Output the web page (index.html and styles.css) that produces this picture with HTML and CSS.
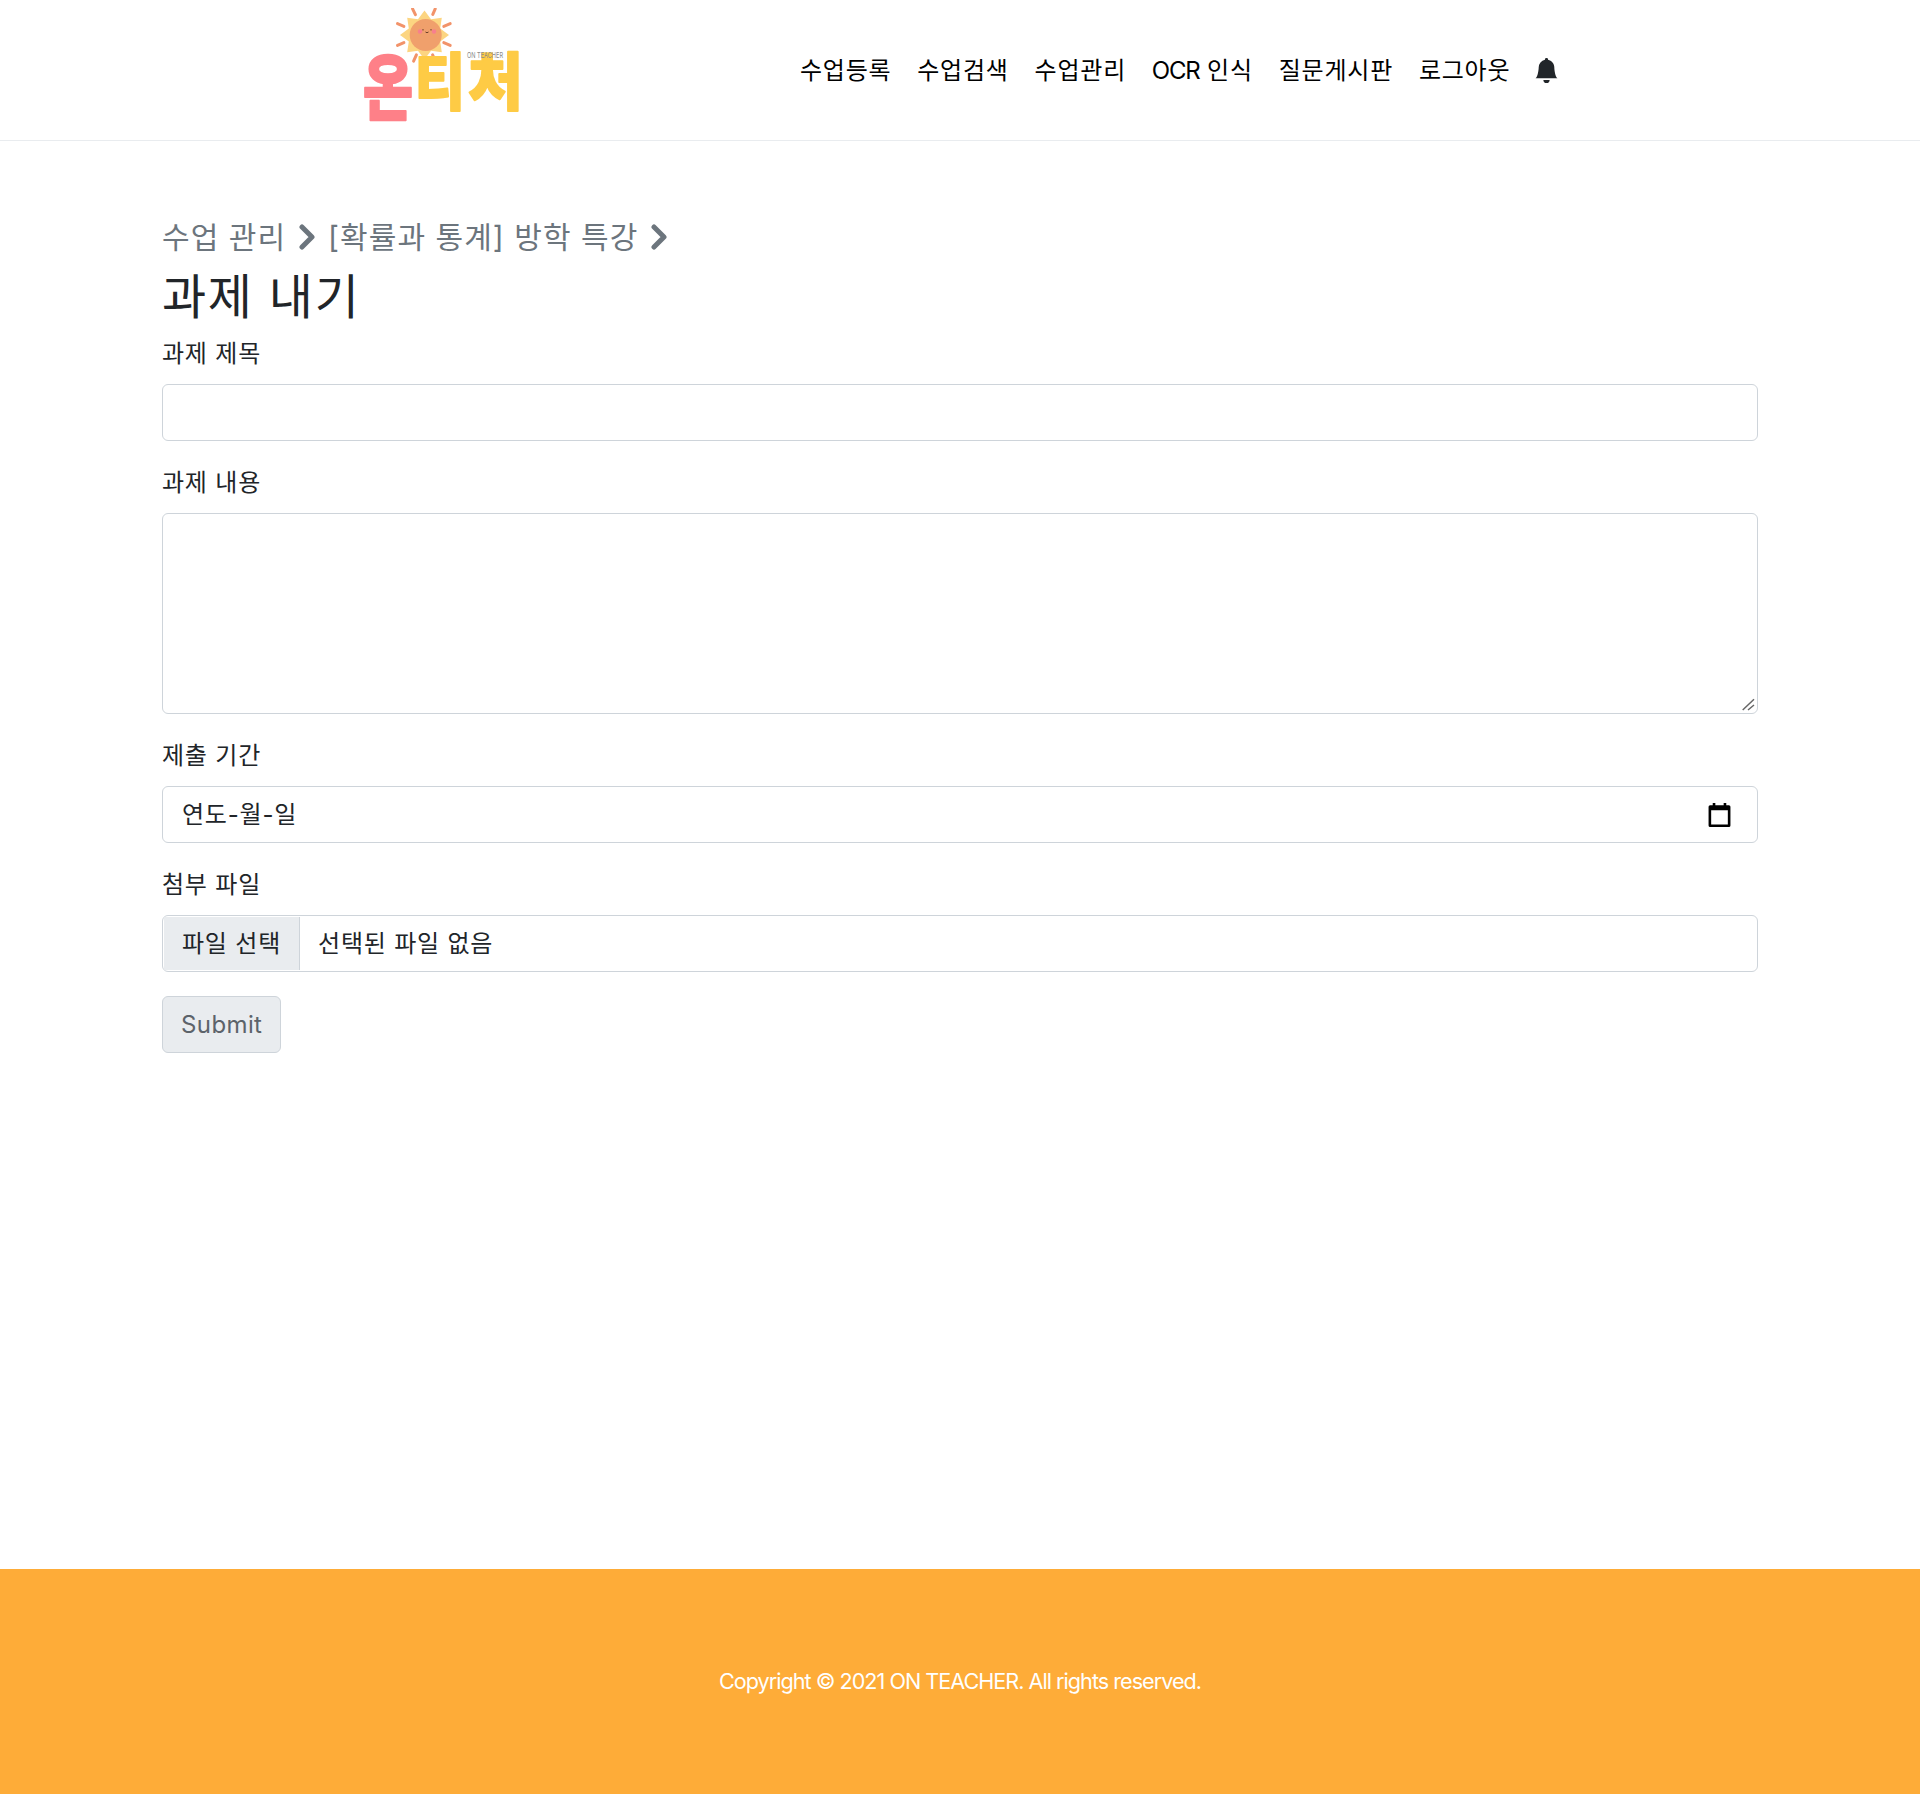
FILE: index.html
```html
<!DOCTYPE html>
<html lang="ko">
<head>
<meta charset="utf-8">
<title>과제 내기</title>
<link rel="stylesheet" href="styles.css">
</head>
<body>
<header class="site-header">
  <a class="logo" href="#" aria-label="온티처">
    <svg class="logo-art" viewBox="0 0 170 124" width="170" height="124">
      <g class="rays">
        <line x1="54.600" y1="0.800" x2="57.400" y2="6.700"/><line x1="74.800" y1="6.400" x2="77.200" y2="0.800"/>
        <line x1="39.500" y1="15.600" x2="45.900" y2="18.400"/><line x1="85.800" y1="18.400" x2="92.200" y2="15.600"/>
        <line x1="39.500" y1="37.400" x2="45.900" y2="34.600"/><line x1="85.800" y1="34.600" x2="92.200" y2="37.400"/>
        <line x1="58.400" y1="46.800" x2="55.600" y2="53.200"/><line x1="74.600" y1="46.800" x2="77.400" y2="53.200"/>
      </g>
      <polygon class="sun-star" points="66.500,2.500 73,11.300 83.800,9.700 82.200,20.500 91,27 82.200,33.500 83.800,44.300 73,42.700 66.500,51.500 60,42.700 49.200,44.300 50.800,33.500 42,27 50.800,20.500 49.200,9.700 60,11.300"/>
      <circle class="sun-body" cx="67.700" cy="27" r="16"/>
      <circle class="sun-cheek" cx="62" cy="23.500" r="2.200"/><circle class="sun-cheek" cx="76" cy="23.500" r="2.200"/>
      <path class="sun-face" d="M65 21v1.500M73 21v1.500M67.500 24q1.500 1.500 3 0"/>
      <text class="word word-pink" x="5" y="106" textLength="50" lengthAdjust="spacingAndGlyphs">온</text>
      <text class="word word-yellow" x="57" y="97" textLength="50" lengthAdjust="spacingAndGlyphs">티</text>
      <text class="word word-yellow" x="110" y="97" textLength="55" lengthAdjust="spacingAndGlyphs">처</text>
      <text class="logo-sub" x="109" y="50" textLength="36" lengthAdjust="spacingAndGlyphs">ON TEACHER</text>
    </svg>
  </a>
  <nav class="main-nav">
    <a href="#">수업등록</a>
    <a href="#">수업검색</a>
    <a href="#">수업관리</a>
    <a href="#"><span class="latin-tight">OCR</span> 인식</a>
    <a href="#">질문게시판</a>
    <a href="#">로그아웃</a>
    <a href="#" class="bell" aria-label="알림">
      <svg viewBox="0 0 16 16" width="25" height="25"><path d="M8 16a2 2 0 0 0 2-2H6a2 2 0 0 0 2 2zm.995-14.901a1 1 0 1 0-1.99 0A5.002 5.002 0 0 0 3 6c0 1.098-.5 6-2 7h14c-1.5-1-2-5.902-2-7 0-2.42-1.72-4.44-4.005-4.901z"/></svg>
    </a>
  </nav>
</header>

<main class="content">
  <div class="crumbs">
    <span>수업 관리</span>
    <svg class="chev" viewBox="0 0 20 26" width="20" height="26"><path d="M5 3l10 10L5 23"/></svg>
    <span>[확률과 통계] 방학 특강</span>
    <svg class="chev" viewBox="0 0 20 26" width="20" height="26"><path d="M5 3l10 10L5 23"/></svg>
  </div>
  <h2 class="page-title">과제 내기</h2>
  <form>
    <div class="field">
      <label class="field-label" for="t">과제 제목</label>
      <input class="control" id="t" type="text">
    </div>
    <div class="field">
      <label class="field-label" for="c">과제 내용</label>
      <div class="area-wrap">
        <textarea class="control area" id="c"></textarea>
        <svg class="grip" viewBox="0 0 16 16" width="16" height="16"><path d="M2.700 14L14 3.300M8 14l6-5"/></svg>
      </div>
    </div>
    <div class="field">
      <div class="field-label">제출 기간</div>
      <div class="control date">
        <span>연도-월-일</span>
        <svg viewBox="0 0 24 24" width="25" height="25"><path d="M5.500 3V1h2.500v2h8V1h2.500v2H21a1.500 1.500 0 0 1 1.500 1.500v18A1.500 1.500 0 0 1 21 24H3a1.500 1.500 0 0 1-1.500-1.500v-18A1.500 1.500 0 0 1 3 3zM4 8v13.500h16V8z"/></svg>
      </div>
    </div>
    <div class="field">
      <div class="field-label">첨부 파일</div>
      <div class="control file">
        <span class="file-btn">파일 선택</span>
        <span class="file-name">선택된 파일 없음</span>
      </div>
    </div>
    <button class="submit" type="button">Submit</button>
  </form>
</main>

<footer class="site-footer">Copyright © 2021 ON TEACHER. All rights reserved.</footer>
</body>
</html>
```
FILE: styles.css
```css
* { box-sizing: border-box; }
html, body { margin: 0; }
body {
  min-height: 1794px;
  display: flex;
  flex-direction: column;
  font-family: Inter, "Noto Sans CJK KR", sans-serif;
  font-size: 24px;
  line-height: 1.5;
  letter-spacing: 0.033em;
  color: #212529;
  background: #fff;
}
.site-header {
  height: 141px;
  border-bottom: 1px solid #e9ecef;
  display: flex;
  align-items: center;
  padding-left: 358px;
}
.logo { display: block; height: 124px; width: 429px; }
.logo-art { display: block; }
.rays line { stroke: #f2936a; stroke-width: 3; stroke-linecap: round; }
.sun-star { fill: #fcd581; }
.sun-body { fill: #f0a06c; }
.sun-cheek { fill: #f77f8e; }
.sun-face { fill: none; stroke: #6b3f2a; stroke-width: 1; }
.word { font-family: "Noto Sans CJK KR", sans-serif; font-weight: 900; stroke-width: 2; stroke-linejoin: round; letter-spacing: 0; }
.word-pink { fill: #fe8088; stroke: #fe8088; font-size: 72px; }
.word-yellow { fill: #fecb45; stroke: #fecb45; font-size: 62px; }
.logo-sub { font-size: 8px; fill: #8a8a8a; letter-spacing: 0; }
.main-nav { display: flex; align-items: center; }
.main-nav a { padding: 9px 12.920px 7px; color: #000; text-decoration: none; white-space: nowrap; }
.main-nav .bell { padding: 0 0 0 11px; display: flex; }
.latin-tight { letter-spacing: -1.200px; }
.bell svg { fill: #212529; display: block; }
.content { flex: 1; padding: 78px 162px 0; }
.crumbs {
  display: flex;
  align-items: center;
  gap: 11px;
  font-size: 30px;
  line-height: 36px;
  letter-spacing: 0.035em;
  color: #6c757d;
  margin-bottom: 13px;
}
.chev { fill: none; stroke: #6c757d; stroke-width: 5; stroke-linecap: round; stroke-linejoin: round; }
.page-title { margin: 0 0 10px; font-size: 48px; font-weight: 400; line-height: 1.2; letter-spacing: 0.035em; }
.field { margin-bottom: 24px; }
.field-label { display: block; margin-bottom: 12px; }
.control {
  display: block;
  width: 100%;
  height: 57px;
  padding: 10px 18px 8px;
  border: 1px solid #ced4da;
  border-radius: 6px;
  background: #fff;
  font: inherit;
  letter-spacing: inherit;
  color: #212529;
}
.area-wrap { position: relative; }
.area { height: 201px; resize: none; }
.grip { position: absolute; right: 2px; bottom: 2px; fill: none; stroke: #666; stroke-width: 1.500; }
.date { display: flex; align-items: center; justify-content: space-between; padding-left: 19px; padding-right: 25px; }
.date svg { fill: #000; display: block; margin-top: -2px; }
.file { display: flex; align-items: stretch; padding: 0; overflow: hidden; }
.file-btn { display: flex; align-items: center; padding: 2px 18px 0; background: #e9ecef; border-right: 1px solid #ced4da; margin: 1px 0 1px 1px; }
.file-name { display: flex; align-items: center; padding: 2px 0 0 18px; }
.submit {
  display: block;
  height: 57px;
  padding: 10px 18px 8px;
  border: 1px solid #ced4da;
  border-radius: 6px;
  background: #e9ecef;
  font: inherit;
  letter-spacing: 0.400px;
  color: #5c636a;
}
.site-footer {
  height: 225px;
  background: #feac38;
  color: #fff;
  display: flex;
  align-items: center;
  justify-content: center;
  font-size: 21.600px;
  letter-spacing: -0.980px;
}
```
